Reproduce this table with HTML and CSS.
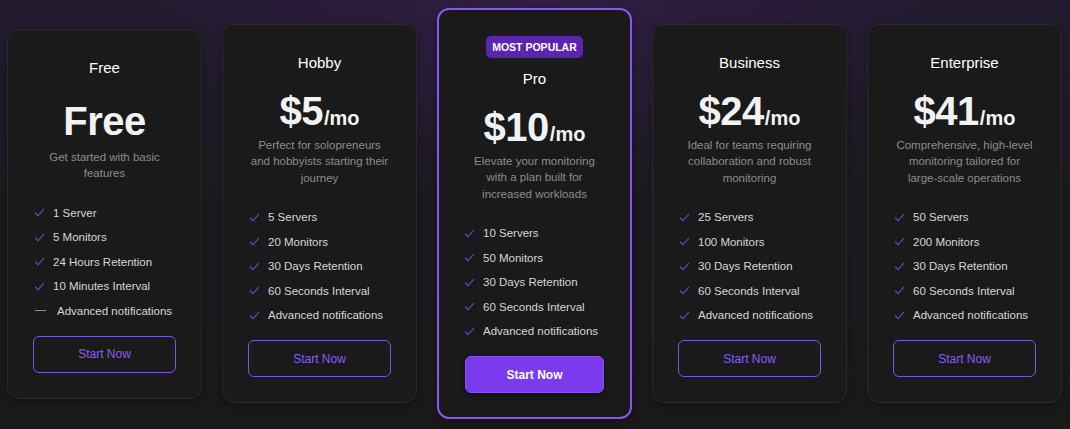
FILE: index.html
```html
<!DOCTYPE html>
<html lang="en">
<head>
<meta charset="utf-8">
<title>Pricing</title>
<link rel="stylesheet" href="styles.css">
</head>
<body>
<main class="pricing">
  <section class="card">
    <h3 class="plan">Free</h3>
    <div class="price price-free"><span class="amount">Free</span></div>
    <p class="desc">Get started with basic<br>features</p>
    <ul class="features">
      <li><svg class="check" viewBox="0 0 12 12"><path d="M1.5 6.5 L4.5 9.5 L10.5 2.5"/></svg>1 Server</li>
      <li><svg class="check" viewBox="0 0 12 12"><path d="M1.5 6.5 L4.5 9.5 L10.5 2.5"/></svg>5 Monitors</li>
      <li><svg class="check" viewBox="0 0 12 12"><path d="M1.5 6.5 L4.5 9.5 L10.5 2.5"/></svg>24 Hours Retention</li>
      <li><svg class="check" viewBox="0 0 12 12"><path d="M1.5 6.5 L4.5 9.5 L10.5 2.5"/></svg>10 Minutes Interval</li>
      <li class="off"><span class="dash"></span>Advanced notifications</li>
    </ul>
    <button class="btn">Start Now</button>
  </section>

  <section class="card">
    <h3 class="plan">Hobby</h3>
    <div class="price"><span class="amount">$5</span><span class="per">/mo</span></div>
    <p class="desc">Perfect for solopreneurs<br>and hobbyists starting their<br>journey</p>
    <ul class="features">
      <li><svg class="check" viewBox="0 0 12 12"><path d="M1.5 6.5 L4.5 9.5 L10.5 2.5"/></svg>5 Servers</li>
      <li><svg class="check" viewBox="0 0 12 12"><path d="M1.5 6.5 L4.5 9.5 L10.5 2.5"/></svg>20 Monitors</li>
      <li><svg class="check" viewBox="0 0 12 12"><path d="M1.5 6.5 L4.5 9.5 L10.5 2.5"/></svg>30 Days Retention</li>
      <li><svg class="check" viewBox="0 0 12 12"><path d="M1.5 6.5 L4.5 9.5 L10.5 2.5"/></svg>60 Seconds Interval</li>
      <li><svg class="check" viewBox="0 0 12 12"><path d="M1.5 6.5 L4.5 9.5 L10.5 2.5"/></svg>Advanced notifications</li>
    </ul>
    <button class="btn">Start Now</button>
  </section>

  <section class="card card-popular">
    <span class="badge">MOST POPULAR</span>
    <h3 class="plan">Pro</h3>
    <div class="price"><span class="amount">$10</span><span class="per">/mo</span></div>
    <p class="desc">Elevate your monitoring<br>with a plan built for<br>increased workloads</p>
    <ul class="features">
      <li><svg class="check" viewBox="0 0 12 12"><path d="M1.5 6.5 L4.5 9.5 L10.5 2.5"/></svg>10 Servers</li>
      <li><svg class="check" viewBox="0 0 12 12"><path d="M1.5 6.5 L4.5 9.5 L10.5 2.5"/></svg>50 Monitors</li>
      <li><svg class="check" viewBox="0 0 12 12"><path d="M1.5 6.5 L4.5 9.5 L10.5 2.5"/></svg>30 Days Retention</li>
      <li><svg class="check" viewBox="0 0 12 12"><path d="M1.5 6.5 L4.5 9.5 L10.5 2.5"/></svg>60 Seconds Interval</li>
      <li><svg class="check" viewBox="0 0 12 12"><path d="M1.5 6.5 L4.5 9.5 L10.5 2.5"/></svg>Advanced notifications</li>
    </ul>
    <button class="btn btn-primary">Start Now</button>
  </section>

  <section class="card">
    <h3 class="plan">Business</h3>
    <div class="price"><span class="amount">$24</span><span class="per">/mo</span></div>
    <p class="desc">Ideal for teams requiring<br>collaboration and robust<br>monitoring</p>
    <ul class="features">
      <li><svg class="check" viewBox="0 0 12 12"><path d="M1.5 6.5 L4.5 9.5 L10.5 2.5"/></svg>25 Servers</li>
      <li><svg class="check" viewBox="0 0 12 12"><path d="M1.5 6.5 L4.5 9.5 L10.5 2.5"/></svg>100 Monitors</li>
      <li><svg class="check" viewBox="0 0 12 12"><path d="M1.5 6.5 L4.5 9.5 L10.5 2.5"/></svg>30 Days Retention</li>
      <li><svg class="check" viewBox="0 0 12 12"><path d="M1.5 6.5 L4.5 9.5 L10.5 2.5"/></svg>60 Seconds Interval</li>
      <li><svg class="check" viewBox="0 0 12 12"><path d="M1.5 6.5 L4.5 9.5 L10.5 2.5"/></svg>Advanced notifications</li>
    </ul>
    <button class="btn">Start Now</button>
  </section>

  <section class="card">
    <h3 class="plan">Enterprise</h3>
    <div class="price"><span class="amount">$41</span><span class="per">/mo</span></div>
    <p class="desc">Comprehensive, high-level<br>monitoring tailored for<br>large-scale operations</p>
    <ul class="features">
      <li><svg class="check" viewBox="0 0 12 12"><path d="M1.5 6.5 L4.5 9.5 L10.5 2.5"/></svg>50 Servers</li>
      <li><svg class="check" viewBox="0 0 12 12"><path d="M1.5 6.5 L4.5 9.5 L10.5 2.5"/></svg>200 Monitors</li>
      <li><svg class="check" viewBox="0 0 12 12"><path d="M1.5 6.5 L4.5 9.5 L10.5 2.5"/></svg>30 Days Retention</li>
      <li><svg class="check" viewBox="0 0 12 12"><path d="M1.5 6.5 L4.5 9.5 L10.5 2.5"/></svg>60 Seconds Interval</li>
      <li><svg class="check" viewBox="0 0 12 12"><path d="M1.5 6.5 L4.5 9.5 L10.5 2.5"/></svg>Advanced notifications</li>
    </ul>
    <button class="btn">Start Now</button>
  </section>
</main>
</body>
</html>
```
FILE: styles.css
```css
* { box-sizing: border-box; }
html, body { margin: 0; height: 100%; }
body {
  font-family: "Liberation Sans", Arial, sans-serif;
  color: #fff;
  background:
    radial-gradient(ellipse 560px 260px at 540px 0px, rgba(70, 35, 105, 0.35), rgba(0,0,0,0) 70%),
    linear-gradient(180deg, #231a30 0px, #201a2a 80px, #1b191f 200px, #19191a 429px);
  overflow: hidden;
}
.pricing {
  display: flex;
  align-items: center;
  gap: 20px;
  padding: 0 8px 0 7px;
  height: 427px;
}
.card {
  width: 195px;
  flex: 0 0 195px;
  background: #1a1a1a;
  border: 1px solid #2a2a2c;
  border-radius: 12px;
  padding: 28px 25px 25px;
  display: flex;
  flex-direction: column;
  align-items: center;
  box-shadow: 0 2px 6px rgba(0,0,0,0.3);
}
.card-popular {
  border: 2px solid #8a55f0;
  padding: 26px 24px 24px;
}
.badge {
  background: #5b25b0;
  color: #fff;
  font-size: 10.5px;
  font-weight: 700;
  line-height: 22px;
  height: 22px;
  padding: 0 6px;
  border-radius: 5px;
  margin: 0 0 11px;
  white-space: nowrap;
}
.plan {
  margin: 0;
  font-size: 15px;
  font-weight: 400;
  line-height: 20px;
  color: #fff;
}
.price {
  margin-top: 16px;
  display: flex;
  align-items: baseline;
  line-height: 44px;
  height: 44px;
}
.price-free { margin-top: 21px; margin-bottom: 2px; }
.amount {
  font-size: 40px;
  font-weight: 700;
  color: #f2f2f2;
  letter-spacing: -0.5px;
}
.per {
  font-size: 20px;
  font-weight: 700;
  color: #f2f2f2;
  margin-left: 1px;
}
.desc {
  margin: 4px 0 0;
  font-size: 11.5px;
  line-height: 16.5px;
  color: #8c8c8c;
  text-align: center;
  white-space: nowrap;
}
.features {
  list-style: none;
  margin: 23px 0 0;
  padding: 0;
  align-self: stretch;
  display: flex;
  flex-direction: column;
  gap: 8.5px;
}
.features li {
  display: flex;
  align-items: center;
  font-size: 11.5px;
  line-height: 16px;
  color: #d6d6d6;
  padding-left: 1px;
  white-space: nowrap;
}
.check {
  flex: 0 0 11px;
  width: 11px;
  height: 11px;
  margin-right: 8px;
  fill: none;
  stroke: #6a40c0;
  stroke-width: 1.3;
  stroke-linecap: round;
  stroke-linejoin: round;
}
.dash {
  flex: 0 0 11px;
  display: inline-block;
  width: 11px;
  height: 1px;
  background: #8a8a8a;
  margin: 0 11px 0 1px;
}
.btn {
  margin-top: 17px;
  align-self: stretch;
  height: 37px;
  border-radius: 6px;
  background: transparent;
  border: 1px solid #7c55dc;
  color: #8b5cf6;
  font-family: "Liberation Sans", Arial, sans-serif;
  font-size: 12px;
  cursor: pointer;
}
.btn-primary {
  margin-left: 2px;
  margin-right: 2px;
  height: 37px;
  background: #7c3aed;
  border-color: #8a4ff5;
  color: #fff;
  font-weight: 700;
  box-shadow: 0 2px 4px rgba(0,0,0,0.5);
}
```
